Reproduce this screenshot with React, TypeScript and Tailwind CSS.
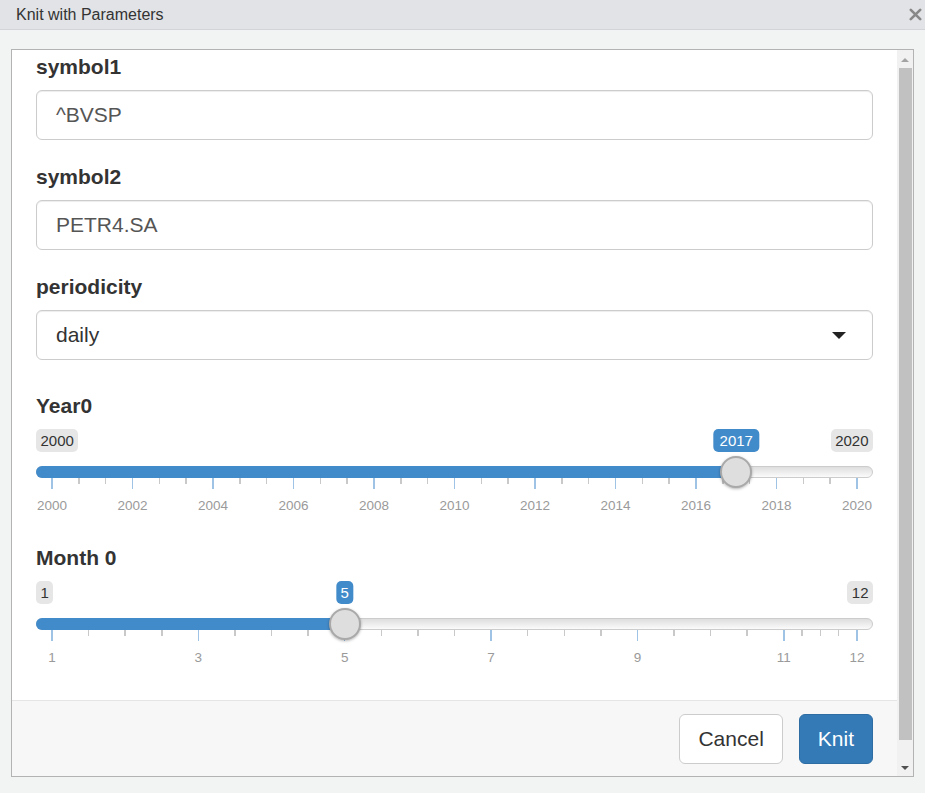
import React from "react";

type Major = { v: number; label: string };

function Slider({
  min,
  max,
  value,
  majors,
  minors,
  bubblePad,
}: {
  min: number;
  max: number;
  value: number;
  majors: Major[];
  minors: number[];
  bubblePad?: string;
}) {
  const x = (v: number) => 16 + ((v - min) / (max - min)) * 805;
  const hx = x(value);
  return (
    <div className="relative h-[88px] w-full">
      {/* min / max labels */}
      <div className="absolute left-0 top-0 h-[23px] rounded-[5px] bg-[#e6e6e6] px-[4.5px] text-[15px] leading-[23px] text-[#333]">
        {String(min)}
      </div>
      <div className="absolute right-0 top-0 h-[23px] rounded-[5px] bg-[#e6e6e6] px-[4.5px] text-[15px] leading-[23px] text-[#333]">
        {String(max)}
      </div>
      {/* value bubble */}
      <div
        className={`absolute top-0 h-[23px] -translate-x-1/2 rounded-[5px] bg-[#428bca] text-[15px] leading-[23px] text-white ${bubblePad ?? "px-[4.5px]"}`}
        style={{ left: hx }}
      >
        {String(value)}
      </div>
      {/* track */}
      <div className="absolute left-0 right-0 top-[37px] h-[12px] rounded-full border border-[#cccccc] bg-gradient-to-b from-[#dedede] to-[#fbfbfb]" />
      <div
        className="absolute left-0 top-[37px] h-[12px] rounded-l-full bg-[#428bca]"
        style={{ width: hx }}
      />
      {/* ticks */}
      {minors.map((v) => (
        <div
          key={"m" + v}
          className="absolute top-[49px] h-[6px] w-[1.5px] bg-[#c9c9c9]"
          style={{ left: x(v) - 0.75 }}
        />
      ))}
      {majors.map((m) => (
        <div
          key={"M" + m.v}
          className="absolute top-[49px] h-[11px] w-[1.5px] bg-[#9fc3e4]"
          style={{ left: x(m.v) - 0.75 }}
        />
      ))}
      {majors.map((m) => (
        <div
          key={"L" + m.v}
          className="absolute top-[69px] -translate-x-1/2 text-[13.5px] leading-[16px] text-[#9a9a9a]"
          style={{ left: x(m.v) }}
        >
          {m.label}
        </div>
      ))}
      {/* handle */}
      <div
        className="absolute top-[27px] h-[32px] w-[32px] rounded-full border-2 border-[#a9a9a9] bg-[#dedede] shadow-[0_1px_3px_rgba(0,0,0,0.3)]"
        style={{ left: hx - 16 }}
      />
    </div>
  );
}

export default function App() {
  const yearMajors: Major[] = [];
  const yearMinors: number[] = [];
  for (let y = 2000; y <= 2020; y += 2) {
    yearMajors.push({ v: y, label: String(y) });
    if (y < 2020) {
      yearMinors.push(y + 2 / 3, y + 4 / 3);
    }
  }
  const monthMajors: Major[] = [1, 3, 5, 7, 9, 11, 12].map((v) => ({
    v,
    label: String(v),
  }));
  const monthMinors: number[] = [
    1.5, 2, 2.5, 3.5, 4, 4.5, 5.5, 6, 6.5, 7.5, 8, 8.5, 9.5, 10, 10.5, 11.25,
    11.5, 11.75,
  ];

  const labelCls =
    "block h-[30px] text-[21px] font-bold leading-[30px] text-[#333]";
  const inputCls =
    "flex h-[50px] w-full items-center rounded-[6px] border-[1.5px] border-[#cccccc] bg-white pl-[19px] text-[21px] text-[#555] shadow-[inset_0_1px_1px_rgba(0,0,0,0.075)]";

  return (
    <div
      className="flex h-[793px] w-[925px] flex-col bg-[#f2f3f3]"
      style={{ fontFamily: '"Liberation Sans", Arial, sans-serif' }}
    >
      {/* title bar */}
      <div className="flex h-[30px] items-center justify-between border-b border-[#d2d4d7] bg-[#e1e3e6] pl-[16px] pr-[3px]">
        <span className="text-[16px] text-[#333]">Knit with Parameters</span>
        <svg width="13" height="13" viewBox="0 0 13 13" className="mb-[1px]">
          <path
            d="M1.8 1.8 L11.2 11.2 M11.2 1.8 L1.8 11.2"
            stroke="#888888"
            strokeWidth="2.6"
            strokeLinecap="round"
          />
        </svg>
      </div>

      {/* frame */}
      <div className="ml-[11px] mt-[19px] flex h-[728px] w-[903px] border border-[#b3b3b3]">
        <div className="flex flex-1 flex-col bg-white">
          <div className="flex-1 px-[24px] pt-[2px]">
            <label className={labelCls}>symbol1</label>
            <div className={`mt-[8px] ${inputCls}`}>^BVSP</div>

            <label className={`mt-[22px] ${labelCls}`}>symbol2</label>
            <div className={`mt-[8px] ${inputCls}`}>PETR4.SA</div>

            <label className={`mt-[22px] ${labelCls}`}>periodicity</label>
            <div className={`mt-[8px] justify-between pr-[26px] ${inputCls} !text-[#333]`}>
              <span>daily</span>
              <svg width="14" height="7" viewBox="0 0 14 7">
                <path d="M0 0 L14 0 L7 7 Z" fill="#222" />
              </svg>
            </div>

            <label className={`mt-[31px] ${labelCls}`}>Year0</label>
            <div className="mt-[8px]">
              <Slider
                min={2000}
                max={2020}
                value={2017}
                majors={yearMajors}
                minors={yearMinors}
                bubblePad="px-[6px]"
              />
            </div>

            <label className={`mt-[26px] ${labelCls}`}>Month 0</label>
            <div className="mt-[8px]">
              <Slider
                min={1}
                max={12}
                value={5}
                majors={monthMajors}
                minors={monthMinors}
              />
            </div>
          </div>

          {/* footer */}
          <div className="flex h-[76px] items-center justify-end gap-[16px] border-t border-[#e5e5e5] bg-[#f7f7f7] pr-[24px]">
            <button className="h-[50px] rounded-[6px] border-[1.5px] border-[#cccccc] bg-white px-[18px] text-[21px] text-[#333]">
              Cancel
            </button>
            <button className="h-[50px] rounded-[6px] border-[1.5px] border-[#2e6da4] bg-[#337ab7] px-[18px] text-[21px] text-white">
              Knit
            </button>
          </div>
        </div>

        {/* scrollbar */}
        <div className="flex w-[16px] flex-col bg-[#f1f1f1]">
          <div className="flex h-[17px] items-center justify-center pt-[3px]">
            <svg width="8" height="4" viewBox="0 0 8 4">
              <path d="M0 4 L8 4 L4 0 Z" fill="#a3a3a3" />
            </svg>
          </div>
          <div className="mx-[1.5px] mt-[1px] h-[672px] bg-[#c1c1c1]" />
          <div className="flex-1" />
          <div className="flex h-[17px] items-center justify-center">
            <svg width="8" height="4" viewBox="0 0 8 4">
              <path d="M0 0 L8 0 L4 4 Z" fill="#505050" />
            </svg>
          </div>
        </div>
      </div>
    </div>
  );
}
